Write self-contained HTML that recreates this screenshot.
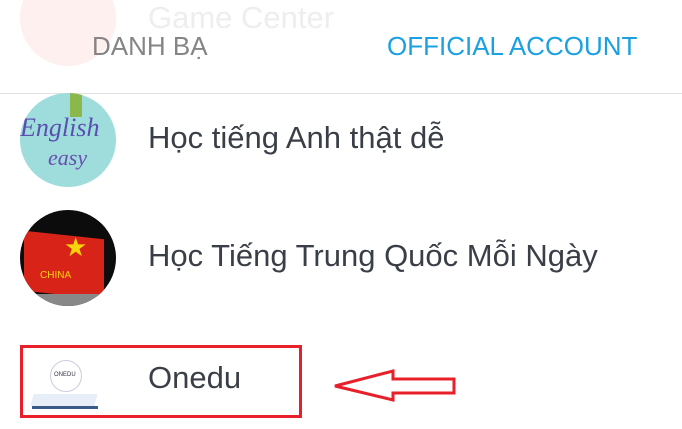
<!DOCTYPE html>
<html><head><meta charset="utf-8"><style>
html,body{margin:0;padding:0;width:682px;height:429px;overflow:hidden;background:#fff;font-family:"Liberation Sans",sans-serif;}
.abs{position:absolute;}
.t{color:#3a3f47;font-size:31px;white-space:nowrap;}
</style></head><body>
<div class="abs" style="left:20px;top:-30px;width:96px;height:96px;border-radius:50%;background:#fdf0ef;"></div>
<div class="abs" style="left:148px;top:0px;font-size:31px;color:#eeeeee;">Game Center</div>
<div class="abs" style="left:92px;top:31px;font-size:26px;color:#858585;">DANH BẠ</div>
<div class="abs" style="left:387px;top:31px;font-size:26px;color:#1ba1e2;">OFFICIAL ACCOUNT</div>
<div class="abs" style="left:0;top:93px;width:682px;height:1px;background:#e2e2e2;"></div>

<div class="abs" style="left:20px;top:93px;width:96px;height:94px;border-radius:50%;background:#9fdcdc;overflow:hidden;">
<div class="abs" style="left:0;top:20px;font:italic 26px 'Liberation Serif',serif;color:#5a4fb0;">English</div>
<div class="abs" style="left:28px;top:52px;font:italic 22px 'Liberation Serif',serif;color:#6a50b0;">easy</div>
<div class="abs" style="left:50px;top:0;width:12px;height:24px;background:#8ab84a;"></div>
</div>
<div class="abs t" style="left:148px;top:120px;">Học tiếng Anh thật dễ</div>

<div class="abs" style="left:20px;top:210px;width:96px;height:96px;border-radius:50%;background:#0c0c0c;overflow:hidden;">
<div class="abs" style="left:4px;top:25px;width:80px;height:60px;background:#d82418;transform:skewY(6deg);"></div>
<div class="abs" style="left:44px;top:22px;font-size:26px;color:#f6d40a;">★</div>
<div class="abs" style="left:20px;top:60px;font-size:10px;color:#f6d40a;">CHINA</div>
<div class="abs" style="left:0;top:84px;width:96px;height:12px;background:#888;"></div>
</div>
<div class="abs t" style="left:148px;top:238px;">Học Tiếng Trung Quốc Mỗi Ngày</div>

<div class="abs" style="left:30px;top:352px;width:70px;height:60px;">
<div class="abs" style="left:20px;top:8px;width:30px;height:30px;border-radius:50%;border:1px solid #ccd;"></div>
<div class="abs" style="left:24px;top:20px;font-size:6px;color:#334;">ONEDU</div>
<div class="abs" style="left:2px;top:42px;width:64px;height:12px;background:#e8eef8;transform:skewX(-15deg);"></div>
<div class="abs" style="left:2px;top:54px;width:66px;height:3px;background:#3a5a8a;"></div>
</div>
<div class="abs t" style="left:148px;top:360px;">Onedu</div>

<div class="abs" style="left:20px;top:345px;width:276px;height:67px;border:3px solid #e8202a;"></div>
<svg class="abs" style="left:0;top:0" width="682" height="429"><path d="M335 386 L393 371 L393 379 L454 379 L454 393 L393 393 L393 400 Z" fill="none" stroke="#e8202a" stroke-width="3" stroke-linejoin="miter"/></svg>
</body></html>
